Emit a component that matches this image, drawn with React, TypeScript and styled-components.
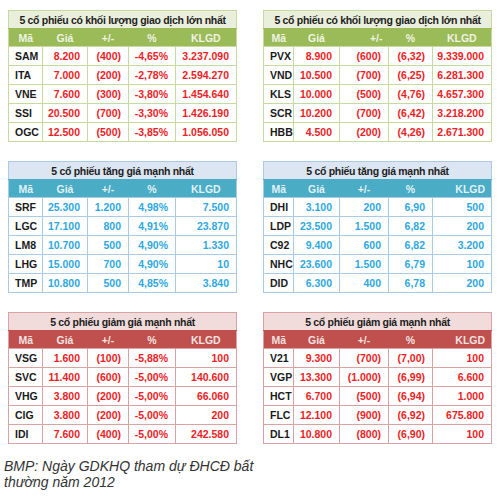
import React from 'react';
import styled, { createGlobalStyle } from 'styled-components';

type Tone = 'green' | 'blue' | 'red';

const palette: Record<Tone, { title: string; head: string; line: string; text: string }> = {
  green: { title: '#e9efda', head: '#9bbb59', line: '#c6d9a0', text: '#ee1c25' },
  blue: { title: '#dbe6f2', head: '#4bacc6', line: '#a9cbe6', text: '#2ea8e0' },
  red: { title: '#f2dcdb', head: '#c0504d', line: '#d9a3a1', text: '#ee1c25' },
};

const GlobalStyle = createGlobalStyle`
  html, body {
    margin: 0;
    background: #ffffff;
  }
  body {
    font-family: "Liberation Sans", Arial, sans-serif;
  }
`;

const Page = styled.div`
  width: 500px;
  height: 500px;
  padding: 10px 0 0 8px;
  box-sizing: border-box;
  overflow: hidden;
`;

const Grid = styled.div`
  display: grid;
  grid-template-columns: 228px 228px;
  column-gap: 27px;
  row-gap: 19px;
`;

const StockTable = styled.table<{ $tone: Tone }>`
  width: 228px;
  table-layout: fixed;
  border-collapse: collapse;
  border: 1px solid ${({ $tone }) => palette[$tone].line};
  font-size: 10.5px;
  font-weight: bold;
`;

const TitleCell = styled.th<{ $tone: Tone }>`
  height: 17px;
  padding: 0;
  background: ${({ $tone }) => palette[$tone].title};
  border-bottom: 1px solid ${({ $tone }) => palette[$tone].head};
  color: #1e1e1e;
  font-size: 10.5px;
  letter-spacing: -0.3px;
  text-align: center;
  white-space: nowrap;
`;

const HeadCell = styled.th<{ $tone: Tone; $align: string }>`
  height: 17px;
  padding: 0 6px;
  background: ${({ $tone }) => palette[$tone].head};
  color: rgba(255, 255, 255, 0.85);
  font-size: 10.5px;
  text-align: ${({ $align }) => $align};
`;

const DataCell = styled.td<{ $tone: Tone; $code?: boolean }>`
  height: 18px;
  padding: ${({ $code }) => ($code ? '0 0 0 6px' : '0 7px 0 0')};
  border: 1px solid ${({ $tone }) => palette[$tone].line};
  color: ${({ $tone, $code }) => ($code ? '#1a1a1a' : palette[$tone].text)};
  text-align: ${({ $code }) => ($code ? 'left' : 'right')};
  white-space: nowrap;
`;

const Caption = styled.p`
  margin: 14px 0 0 -4px;
  width: 262px;
  font-style: italic;
  font-size: 14px;
  line-height: 16px;
  color: #333333;
`;

interface TableData {
  tone: Tone;
  title: string;
  cols: number[];
  headAlign: string[];
  rows: string[][];
}

const wideCols = [34, 45, 41, 47, 61];
const narrowCols = [30, 46, 49, 44, 59];

const tables: TableData[] = [
  {
    tone: 'green',
    title: '5 cổ phiếu có khối lượng giao dịch lớn nhất',
    cols: wideCols,
    headAlign: ['center', 'center', 'center', 'center', 'center'],
    rows: [
      ['SAM', '8.200', '(400)', '-4,65%', '3.237.090'],
      ['ITA', '7.000', '(200)', '-2,78%', '2.594.270'],
      ['VNE', '7.600', '(300)', '-3,80%', '1.454.640'],
      ['SSI', '20.500', '(700)', '-3,30%', '1.426.190'],
      ['OGC', '12.500', '(500)', '-3,85%', '1.056.050'],
    ],
  },
  {
    tone: 'green',
    title: '5 cổ phiếu có khối lượng giao dịch lớn nhất',
    cols: narrowCols,
    headAlign: ['center', 'center', 'right', 'center', 'center'],
    rows: [
      ['PVX', '8.900', '(600)', '(6,32)', '9.339.000'],
      ['VND', '10.500', '(700)', '(6,25)', '6.281.300'],
      ['KLS', '10.000', '(500)', '(4,76)', '4.657.300'],
      ['SCR', '10.200', '(700)', '(6,42)', '3.218.200'],
      ['HBB', '4.500', '(200)', '(4,26)', '2.671.300'],
    ],
  },
  {
    tone: 'blue',
    title: '5 cổ phiếu tăng giá mạnh nhất',
    cols: wideCols,
    headAlign: ['center', 'center', 'center', 'center', 'center'],
    rows: [
      ['SRF', '25.300', '1.200', '4,98%', '7.500'],
      ['LGC', '17.100', '800', '4,91%', '23.870'],
      ['LM8', '10.700', '500', '4,90%', '1.330'],
      ['LHG', '15.000', '700', '4,90%', '10'],
      ['TMP', '10.800', '500', '4,85%', '3.840'],
    ],
  },
  {
    tone: 'blue',
    title: '5 cổ phiếu tăng giá mạnh nhất',
    cols: narrowCols,
    headAlign: ['center', 'center', 'center', 'center', 'right'],
    rows: [
      ['DHI', '3.100', '200', '6,90', '500'],
      ['LDP', '23.500', '1.500', '6,82', '200'],
      ['C92', '9.400', '600', '6,82', '3.200'],
      ['NHC', '23.600', '1.500', '6,79', '100'],
      ['DID', '6.300', '400', '6,78', '200'],
    ],
  },
  {
    tone: 'red',
    title: '5 cổ phiếu giảm giá mạnh nhất',
    cols: wideCols,
    headAlign: ['center', 'center', 'center', 'center', 'center'],
    rows: [
      ['VSG', '1.600', '(100)', '-5,88%', '100'],
      ['SVC', '11.400', '(600)', '-5,00%', '140.600'],
      ['VHG', '3.800', '(200)', '-5,00%', '66.060'],
      ['CIG', '3.800', '(200)', '-5,00%', '200'],
      ['IDI', '7.600', '(400)', '-5,00%', '242.580'],
    ],
  },
  {
    tone: 'red',
    title: '5 cổ phiếu giảm giá mạnh nhất',
    cols: narrowCols,
    headAlign: ['center', 'center', 'center', 'center', 'right'],
    rows: [
      ['V21', '9.300', '(700)', '(7,00)', '100'],
      ['VGP', '13.300', '(1.000)', '(6,99)', '6.600'],
      ['HCT', '6.700', '(500)', '(6,94)', '1.000'],
      ['FLC', '12.100', '(900)', '(6,92)', '675.800'],
      ['DL1', '10.800', '(800)', '(6,90)', '100'],
    ],
  },
];

const heads = ['Mã', 'Giá', '+/-', '%', 'KLGD'];

const Table = ({ data }: { data: TableData }) => (
  <StockTable $tone={data.tone}>
    <colgroup>
      {data.cols.map((w, i) => (
        <col key={i} style={{ width: w }} />
      ))}
    </colgroup>
    <thead>
      <tr>
        <TitleCell $tone={data.tone} colSpan={5}>{data.title}</TitleCell>
      </tr>
      <tr>
        {heads.map((h, i) => (
          <HeadCell key={h} $tone={data.tone} $align={data.headAlign[i]}>{h}</HeadCell>
        ))}
      </tr>
    </thead>
    <tbody>
      {data.rows.map((row) => (
        <tr key={row[0]}>
          {row.map((v, i) => (
            <DataCell key={i} $tone={data.tone} $code={i === 0}>{v}</DataCell>
          ))}
        </tr>
      ))}
    </tbody>
  </StockTable>
);

const App = () => (
  <Page>
    <GlobalStyle />
    <Grid>
      {tables.map((t, i) => (
        <Table key={i} data={t} />
      ))}
    </Grid>
    <Caption>BMP: Ngày GDKHQ tham dự ĐHCĐ bất thường năm 2012</Caption>
  </Page>
);

export default App;
